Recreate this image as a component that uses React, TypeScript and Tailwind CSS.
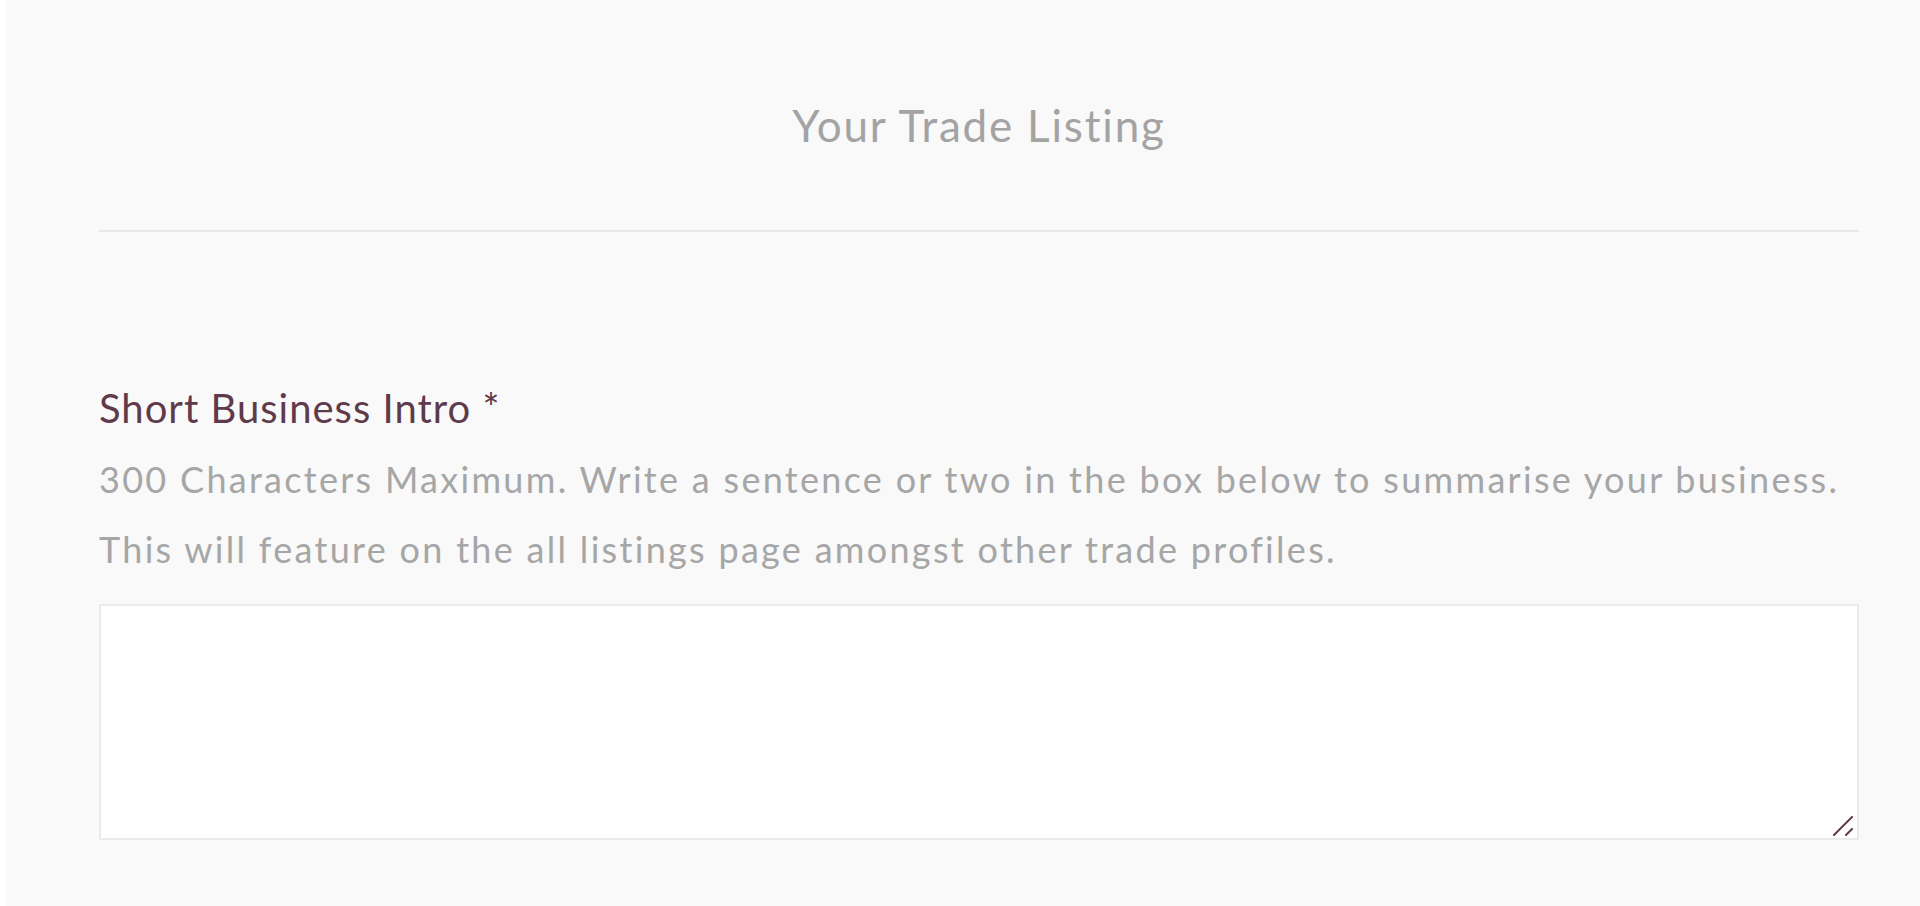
export default function App() {
  return (
    <div className="bg-white pl-[6px] w-full h-[906px] overflow-hidden" style={{ fontFamily: "Lato, 'Noto Sans', sans-serif" }}>
      <div className="bg-[#f9f9f9] h-[906px] pl-[93px] pr-[61px] flex flex-col">
        <div className="w-[1760px] pt-[99px] text-center text-[44px] leading-[53px] tracking-[1.8px] text-[#a3a3a3]">
          Your Trade Listing
        </div>
        <div className="w-[1760px] h-[2px] bg-[#e8e8e8] mt-[78px]" />

        <label className="mt-[152px] text-[40px] leading-[48px] tracking-[1px] text-[#5e3a4b]">Short Business Intro *</label>
        <p className="mt-[12px] text-[36px] leading-[70px] tracking-[2.3px] text-[#a6a6a6] whitespace-nowrap">
          300 Characters Maximum. Write a sentence or two in the box below to summarise your business.
          <br />
          This will feature on the all listings page amongst other trade profiles.
        </p>

        <div className="relative mt-[20px] w-[1760px] h-[236px]">
          <textarea className="block w-full h-full bg-white border-2 border-[#ebebeb] resize-none outline-none" />
          <svg className="absolute right-[5px] bottom-[4px]" width="22" height="22" viewBox="0 0 22 22">
            <line x1="2" y1="21" x2="20" y2="3" stroke="#5e3a4b" strokeWidth="2" strokeLinecap="round" />
            <line x1="14" y1="21" x2="20" y2="15" stroke="#5e3a4b" strokeWidth="2" strokeLinecap="round" />
          </svg>
        </div>
      </div>
    </div>
  );
}
